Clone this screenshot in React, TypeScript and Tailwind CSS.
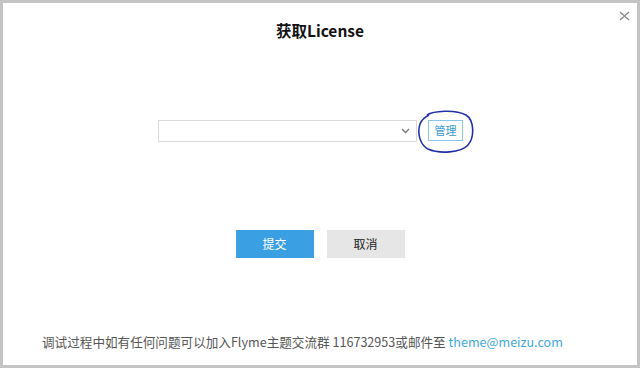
const font = "font-['Noto_Sans_CJK_SC','Noto_Sans',sans-serif]";

export default function App() {
  return (
    <div className={`relative flex h-[368px] w-[640px] flex-col items-center border-[3px] border-[#c4c4c4] bg-white ${font}`}>
      <button className="absolute right-[5px] top-[6px] p-[2px]">
        <svg width="11" height="10" viewBox="0 0 11 10" fill="none" stroke="#8a8a8a" strokeWidth="1.3">
          <path d="M1 1l9 8M10 1l-9 8" />
        </svg>
      </button>

      <h1 className="mt-[16px] text-[15.5px] font-bold leading-[22px] text-[#111]">获取License</h1>

      <div className="ml-[155px] mt-[79px] flex items-start self-start">
        <div className="flex h-[22px] w-[259px] items-center justify-end border border-[#dadada] bg-white pr-[6px]">
          <svg width="9" height="6" viewBox="0 0 9 6" fill="none" stroke="#777" strokeWidth="1.3">
            <path d="M1 1l3.5 3.5L8 1" />
          </svg>
        </div>
        <div className="relative ml-[11px]">
          <button className="flex h-[21px] w-[35px] items-center justify-center border border-[#86c8e6] text-[11px] leading-none text-[#3a9bd0]">
            管理
          </button>
          <svg
            className="pointer-events-none absolute left-[-11px] top-[-11px]"
            width="58"
            height="45"
            viewBox="0 0 58 45"
            fill="none"
          >
            <path
              d="M10 6C16 2 38 0 49 6C57 11 58 28 51 36C44 44 22 45 11 40C3 36 0 24 3 15C5 10 8 8 12 6"
              stroke="#2230a8"
              strokeWidth="1.6"
            />
          </svg>
        </div>
      </div>

      <div className="mt-[88px] flex gap-[13px]">
        <button className="h-[28px] w-[78px] bg-[#3b9fe3] text-[12px] text-white">提交</button>
        <button className="h-[28px] w-[78px] bg-[#e6e6e6] text-[12px] text-[#222]">取消</button>
      </div>

      <p className="ml-[39px] mt-[75px] self-start text-[12.6px] leading-[18px] text-[#555]">
        调试过程中如有任何问题可以加入Flyme主题交流群 116732953或邮件至{" "}
        <span className="text-[#3fa9d8]">theme@meizu.com</span>
      </p>
    </div>
  );
}
